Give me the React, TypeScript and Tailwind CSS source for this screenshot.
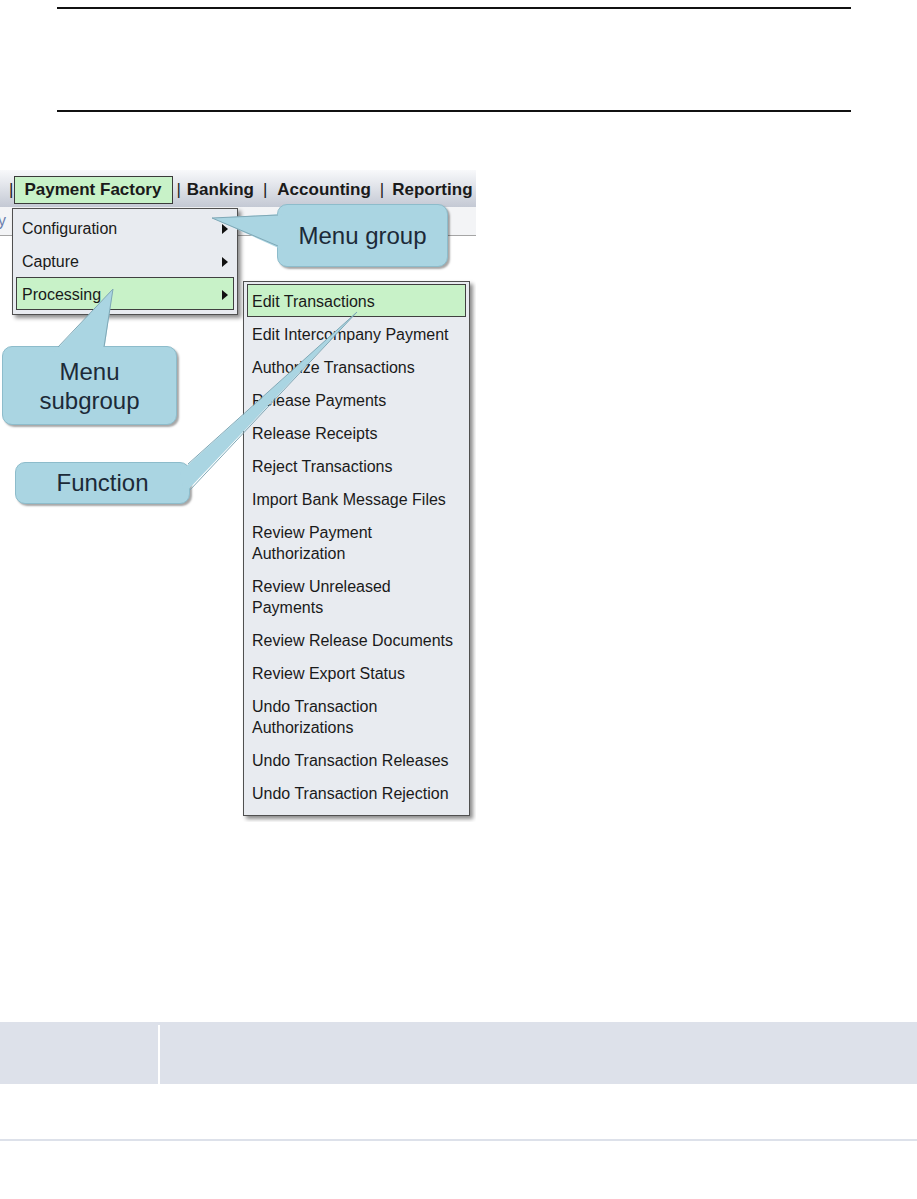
import React from "react";

const functions: string[][] = [
  ["Edit Transactions"],
  ["Edit Intercompany Payment"],
  ["Authorize Transactions"],
  ["Release Payments"],
  ["Release Receipts"],
  ["Reject Transactions"],
  ["Import Bank Message Files"],
  ["Review Payment", "Authorization"],
  ["Review Unreleased", "Payments"],
  ["Review Release Documents"],
  ["Review Export Status"],
  ["Undo Transaction", "Authorizations"],
  ["Undo Transaction Releases"],
  ["Undo Transaction Rejection"],
];

const subgroups = ["Configuration", "Capture", "Processing"];

function Arrow() {
  return (
    <svg width="6" height="10" viewBox="0 0 6 10" className="ml-auto mr-[5px]">
      <polygon points="0,0 6,5 0,10" fill="#111" />
    </svg>
  );
}

export default function App() {
  return (
    <div className="w-[917px] min-h-[1199px] bg-white font-['Liberation_Sans',Arial,sans-serif] text-[#1a1a1a]">
      {/* header rules */}
      <div className="pt-[7px]">
        <div className="ml-[57px] w-[794px] h-[2px] bg-[#111]" />
        <div className="ml-[57px] w-[794px] h-[2px] bg-[#111] mt-[101px]" />
      </div>

      {/* menu figure */}
      <div className="relative mt-[58px] w-[476px] h-[652px] overflow-hidden">
        {/* menu bar */}
        <div className="flex items-center pt-[2px] h-[37px] bg-linear-to-b from-[#f8f9fb] to-[#c4c9d4] text-[17px] font-bold whitespace-nowrap">
          <span className="ml-[9px] font-normal text-[#222]">|</span>
          <div className="ml-[1px] h-[28px] flex items-center border border-[#3a3a3a] bg-[#c8f2c8] pl-[9px] pr-[11px]">
            Payment Factory
          </div>
          <span className="ml-[3px] font-normal text-[#222]">|</span>
          <span className="ml-[6px]">Banking</span>
          <span className="ml-[9px] font-normal text-[#222]">|</span>
          <span className="ml-[10px]">Accounting</span>
          <span className="ml-[9px] font-normal text-[#222]">|</span>
          <span className="ml-[8px]">Reporting</span>
        </div>
        {/* strip under the bar */}
        <div className="h-[29px] bg-[#f3f4f6] border-b border-[#a5a5a5] flex items-center text-[16px] text-[#6b7fae]">
          <span className="-ml-[2px]">y</span>
        </div>

        {/* menu group dropdown */}
        <div className="absolute left-[12px] top-[38px] w-[226px] border border-[#505050] bg-[#e8ebf0] pt-[2px] pb-[4px] shadow-[3px_3px_4px_rgba(0,0,0,0.45)] text-[16px]">
          {subgroups.map((s) => (
            <div
              key={s}
              className={
                s === "Processing"
                  ? "mx-[3px] h-[33px] flex items-center pt-[3px] pl-[5px] border border-[#404040] bg-[#c8f2c8]"
                  : "mx-[3px] h-[33px] flex items-center pt-[3px] pl-[5px] border border-transparent"
              }
            >
              {s}
              <Arrow />
            </div>
          ))}
        </div>

        {/* function dropdown */}
        <div className="absolute left-[243px] top-[111px] w-[227px] border border-[#505050] bg-[#e8ebf0] pt-[2px] pb-[6px] shadow-[3px_3px_4px_rgba(0,0,0,0.45)] text-[16px] leading-[21px]">
          {functions.map((lines, i) => (
            <div
              key={lines.join(" ")}
              className={
                i === 0
                  ? "mx-[3px] pt-[6px] pb-[4px] pl-[4px] border border-[#404040] bg-[#c8f2c8] whitespace-nowrap"
                  : "mx-[3px] pt-[6px] pb-[4px] pl-[4px] border border-transparent whitespace-nowrap"
              }
            >
              {lines.map((l) => (
                <div key={l}>{l}</div>
              ))}
            </div>
          ))}
        </div>

        {/* callouts */}
        <div className="absolute left-[277px] top-[34px] w-[171px] h-[63px] rounded-[10px] border border-[#8dbccb] bg-[#aad5e2] shadow-[2px_2px_2px_rgba(0,0,0,0.35)] flex items-center justify-center text-[24px] text-[#1c2a38]">
          Menu group
        </div>
        <div className="absolute left-[2px] top-[176px] w-[175px] h-[79px] rounded-[10px] border border-[#8dbccb] bg-[#aad5e2] shadow-[2px_2px_2px_rgba(0,0,0,0.35)] flex flex-col items-center justify-center text-[24px] leading-[29px] text-[#1c2a38]">
          <span>Menu</span>
          <span>subgroup</span>
        </div>
        <div className="absolute left-[15px] top-[292px] w-[175px] h-[42px] rounded-[10px] border border-[#8dbccb] bg-[#aad5e2] shadow-[2px_2px_2px_rgba(0,0,0,0.35)] flex items-center justify-center text-[24px] text-[#1c2a38]">
          Function
        </div>

        {/* callout tails */}
        <svg className="absolute inset-0 pointer-events-none" width="476" height="652" viewBox="0 0 476 652">
          <polygon points="212,48 283,44 283,80" fill="#aad5e2" />
          <polyline points="278,45 212,48 278,76" fill="none" stroke="#7fa8b6" strokeWidth="1" />
          <polygon points="113,119 54,182 104,182" fill="#aad5e2" />
          <polyline points="58,177 113,119 104,177" fill="none" stroke="#7fa8b6" strokeWidth="1" />
          <polygon points="357,142 180,302 184,324" fill="#aad5e2" />
          <polyline points="188,294 357,142 190,320" fill="none" stroke="#7fa8b6" strokeWidth="1" />
        </svg>
      </div>

      {/* table */}
      <div className="mt-[200px]">
        <div className="flex h-[62px] bg-[#dde1ea]">
          <div className="w-[158px]" />
          <div className="w-[2px] border-t-[3px] border-[#dde1ea] bg-white" />
          <div className="flex-1" />
        </div>
        <div className="h-[55px]" />
        <div className="h-[2px] bg-[#dde1ea]" />
      </div>
    </div>
  );
}
